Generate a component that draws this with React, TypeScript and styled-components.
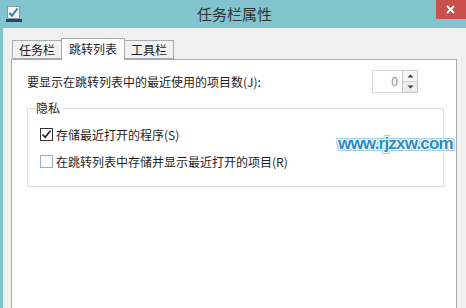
import React from "react";
import styled, { createGlobalStyle } from "styled-components";

const Global = createGlobalStyle`
  html, body { margin: 0; padding: 0; overflow: hidden; background: #80c5cd; }
  * { box-sizing: border-box; }
`;

const FONT = `"Noto Sans CJK SC", "Microsoft YaHei", "Noto Sans", sans-serif`;

const Window = styled.div`
  position: relative;
  width: 466px;
  height: 308px;
  display: flex;
  flex-direction: column;
  background: #80c5cd;
  overflow: hidden;
  font-family: ${FONT};
  font-size: 12px;
  color: #1e1e1e;
`;

const TitleBar = styled.div`
  height: 28px;
  flex: none;
  display: grid;
  grid-template-columns: 1fr auto 1fr;
  align-items: center;
`;

const IconCell = styled.div`
  display: flex;
  align-items: center;
  padding-left: 6px;
  padding-top: 1px;
`;

const Title = styled.div`
  font-size: 15px;
  line-height: 20px;
  color: #333333;
  padding-left: 3px;
`;

const CloseCell = styled.div`
  align-self: start;
  display: flex;
  justify-content: flex-end;
`;

const CloseButton = styled.div`
  width: 30px;
  height: 19px;
  background: #c9504d;
  color: #fff;
  display: flex;
  align-items: center;
  justify-content: center;
  padding-right: 1px;
`;

const Body = styled.div`
  flex: 1;
  margin-left: 3px;
  background: #f0f0f0;
  padding: 10px 9px 0 8px;
  display: flex;
  flex-direction: column;
`;

const TabRow = styled.div`
  display: flex;
  align-items: flex-end;
  height: 21px;
  margin-left: 1px;
  position: relative;
  z-index: 1;
`;

const Tab = styled.div<{ $active?: boolean }>`
  height: ${(p) => (p.$active ? "22px" : "19px")};
  margin-bottom: ${(p) => (p.$active ? "-1px" : "0")};
  margin-left: -1px;
  padding: 0 ${(p) => (p.$active ? "7px" : "6px")};
  padding-bottom: ${(p) => (p.$active ? "2px" : "0")};
  background: ${(p) => (p.$active ? "#ffffff" : "#f0f0f0")};
  border: 1px solid #acacac;
  border-bottom: ${(p) => (p.$active ? "none" : "1px solid #acacac")};
  display: flex;
  align-items: center;
  line-height: 16px;
  color: #1e1e1e;
  &:first-child { margin-left: 0; }
`;

const Panel = styled.div`
  flex: 1;
  background: #ffffff;
  border: 1px solid #acacac;
  border-bottom: none;
  padding: 10px 12px 0 15px;
  display: flex;
  flex-direction: column;
`;

const CountRow = styled.div`
  height: 23px;
  padding-right: 26px;
  display: flex;
  align-items: center;
  justify-content: space-between;
`;

const Label = styled.span`
  line-height: 16px;
  padding-top: 1px;
`;

const Spinner = styled.div`
  display: flex;
  width: 46px;
  height: 23px;
`;

const SpinInput = styled.div`
  flex: 1;
  border: 1px solid #d9d9d9;
  border-right: none;
  display: flex;
  align-items: center;
  justify-content: flex-end;
  padding-right: 4px;
  color: #8a8a8a;
  font-family: "Liberation Sans", Arial, sans-serif;
  font-size: 12px;
`;

const SpinButtons = styled.div`
  width: 16px;
  display: flex;
  flex-direction: column;
  border: 1px solid #c9c9c9;
`;

const SpinButton = styled.div<{ $down?: boolean }>`
  flex: 1;
  display: flex;
  align-items: center;
  justify-content: center;
  background: ${(p) => (p.$down ? "#ececec" : "#f7f7f7")};
  border-top: ${(p) => (p.$down ? "1px solid #d4d4d4" : "none")};
`;

const Group = styled.fieldset`
  margin: 7px 0 0 0;
  padding: 0 0 15px 7px;
  border: 1px solid #dcdcdc;
  min-width: 0;
`;

const Legend = styled.legend`
  padding: 0 2px 0 1px;
  line-height: 16px;
  color: #1e1e1e;
`;

const CheckList = styled.div`
  display: flex;
  flex-direction: column;
  gap: 7px;
  padding: 8px 0 0 5px;
`;

const CheckRow = styled.div`
  height: 20px;
  display: flex;
  align-items: center;
  gap: 3px;
`;

const Box = styled.div<{ $checked?: boolean }>`
  width: 13px;
  height: 13px;
  flex: none;
  border: 1px solid ${(p) => (p.$checked ? "#333333" : "#98afc9")};
  background: #ffffff;
  display: flex;
  align-items: center;
  justify-content: center;
`;

const Watermark = styled.div`
  position: absolute;
  left: 338px;
  top: 134px;
  font-family: "Liberation Sans", Arial, sans-serif;
  font-weight: bold;
  font-size: 17px;
  letter-spacing: -0.8px;
  color: #2a8bc9;
  text-shadow:
    1px 0 0 #fff, -1px 0 0 #fff, 0 1px 0 #fff, 0 -1px 0 #fff,
    1px 1px 0 #fff, -1px -1px 0 #fff, 1px -1px 0 #fff, -1px 1px 0 #fff,
    2px 0 0 #9fd0ea, -2px 0 0 #9fd0ea, 0 2px 0 #9fd0ea, 0 -2px 0 #9fd0ea,
    2px 2px 0 #9fd0ea, -2px -2px 0 #9fd0ea, 2px -2px 0 #9fd0ea, -2px 2px 0 #9fd0ea;
`;

const AppIcon = () => (
  <svg width="16" height="17" viewBox="0 0 16 17">
    <rect x="1.5" y="0.5" width="12" height="12" fill="#f3f5f7" stroke="#8e959e" />
    <path d="M3.5 7 L6 9.8 L11.5 2.5" fill="none" stroke="#2c7bb9" strokeWidth="2" />
    <rect x="0" y="13" width="16" height="3" fill="#2d3f6c" />
  </svg>
);

const Check = () => (
  <svg width="11" height="11" viewBox="0 0 11 11">
    <path d="M1.5 5.5 L4.2 8.3 L9.5 1.8" fill="none" stroke="#222" strokeWidth="1.7" />
  </svg>
);

const Arrow = ({ down }: { down?: boolean }) => (
  <svg width="7" height="4" viewBox="0 0 7 4">
    <path d={down ? "M0.5 0.5 L6.5 0.5 L3.5 3.5 Z" : "M0.5 3.5 L6.5 3.5 L3.5 0.5 Z"} fill="#3a3a3a" />
  </svg>
);

export default function App() {
  return (
    <>
      <Global />
      <Window>
        <TitleBar>
          <IconCell>
            <AppIcon />
          </IconCell>
          <Title>任务栏属性</Title>
          <CloseCell>
            <CloseButton>
              <svg width="9" height="9" viewBox="0 0 9 9">
                <path d="M1 1 L8 8 M8 1 L1 8" stroke="#fff" strokeWidth="1.8" />
              </svg>
            </CloseButton>
          </CloseCell>
        </TitleBar>
        <Body>
          <TabRow>
            <Tab>任务栏</Tab>
            <Tab $active>跳转列表</Tab>
            <Tab>工具栏</Tab>
          </TabRow>
          <Panel>
            <CountRow>
              <Label>要显示在跳转列表中的最近使用的项目数(J):</Label>
              <Spinner>
                <SpinInput>0</SpinInput>
                <SpinButtons>
                  <SpinButton>
                    <Arrow />
                  </SpinButton>
                  <SpinButton $down>
                    <Arrow down />
                  </SpinButton>
                </SpinButtons>
              </Spinner>
            </CountRow>
            <Group>
              <Legend>隐私</Legend>
              <CheckList>
                <CheckRow>
                  <Box $checked>
                    <Check />
                  </Box>
                  <span>存储最近打开的程序(S)</span>
                </CheckRow>
                <CheckRow>
                  <Box />
                  <span>在跳转列表中存储并显示最近打开的项目(R)</span>
                </CheckRow>
              </CheckList>
            </Group>
          </Panel>
        </Body>
        <Watermark>www.rjzxw.com</Watermark>
      </Window>
    </>
  );
}
